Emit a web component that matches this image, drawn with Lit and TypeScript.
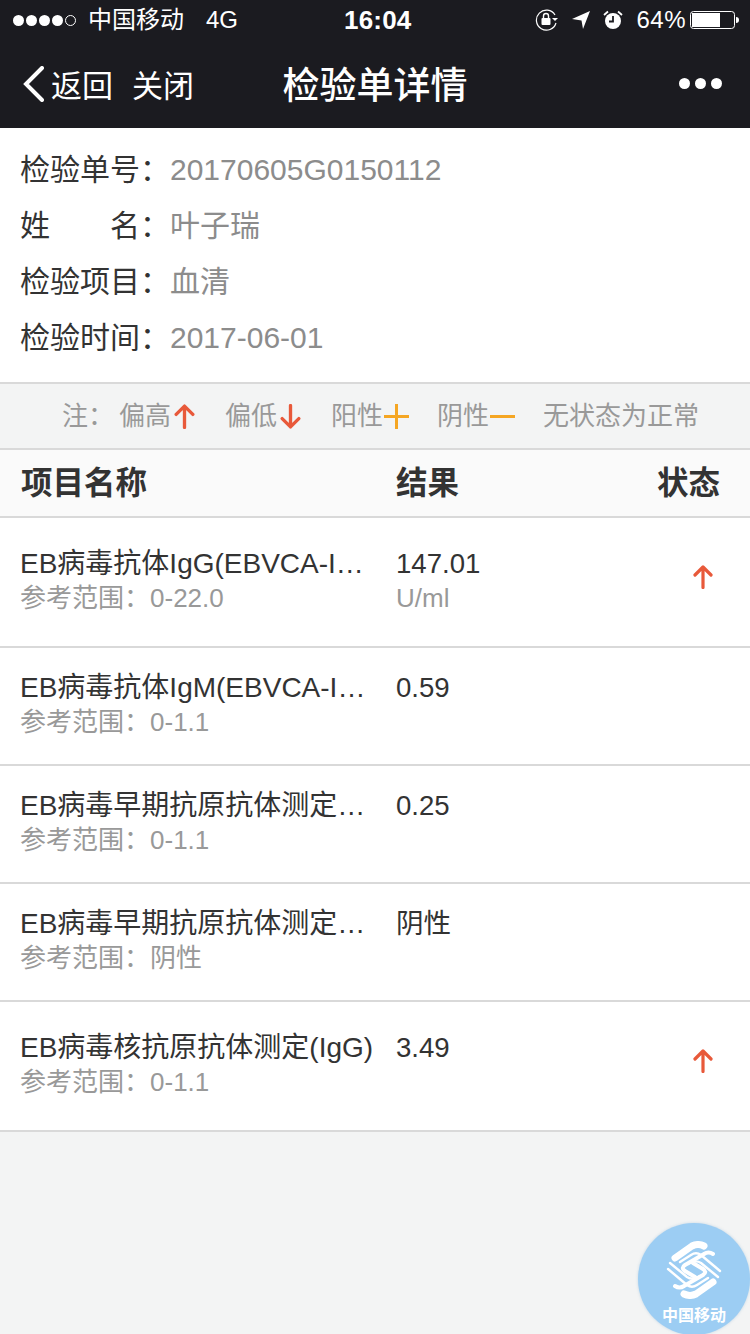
import { LitElement, css, html } from "lit";
import { customElement } from "lit/decorators.js";

const up = html`<svg class="mark" viewBox="0 0 20 24" fill="none" stroke="#e8593a" stroke-width="3.200" stroke-linecap="round" stroke-linejoin="round"><path d="M10 22.500V2M2 10l8-8 8 8"/></svg>`;
const down = html`<svg class="mark" viewBox="0 0 20 24" fill="none" stroke="#e8593a" stroke-width="3.200" stroke-linecap="round" stroke-linejoin="round"><path d="M10 1.500V22M2 14l8 8 8-8"/></svg>`;
const plus = html`<svg class="mark wide" viewBox="0 0 25 25" fill="none" stroke="#f5a623" stroke-width="3"><path d="M0 12.500h25M12.500 0v25"/></svg>`;
const minus = html`<svg class="mark wide" viewBox="0 0 25 25" fill="none" stroke="#f5a623" stroke-width="3"><path d="M0 12.500h25"/></svg>`;

const rows = [
  { name: "EB病毒抗体IgG(EBVCA-IgG)", ref: "0-22.0", value: "147.01", unit: "U/ml", up: true, tall: true },
  { name: "EB病毒抗体IgM(EBVCA-IgM)", ref: "0-1.1", value: "0.59", unit: "", up: false, tall: false },
  { name: "EB病毒早期抗原抗体测定(IgG)", ref: "0-1.1", value: "0.25", unit: "", up: false, tall: false },
  { name: "EB病毒早期抗原抗体测定(IgM)", ref: "阴性", value: "阴性", unit: "", up: false, tall: false },
  { name: "EB病毒核抗原抗体测定(IgG)", ref: "0-1.1", value: "3.49", unit: "", up: true, tall: true },
];

@customElement("app-root")
export class AppRoot extends LitElement {
  static styles = css`
    :host {
      display: block;
      width: 750px;
      height: 1334px;
      overflow: hidden;
      position: relative;
      background: #f3f4f4;
      font-family: "Liberation Sans", "Noto Sans CJK SC", sans-serif;
      color: #333;
    }
    .top {
      background: #1b1b20;
      height: 128px;
      color: #fff;
    }
    .status {
      height: 40px;
      display: flex;
      align-items: center;
      font-size: 24px;
      padding: 0 0 0 13px;
      position: relative;
    }
    .signal {
      display: flex;
      gap: 2px;
      margin-right: 12px;
    }
    .signal i {
      width: 11px;
      height: 11px;
      border-radius: 50%;
      background: #fff;
      box-sizing: border-box;
    }
    .signal i.off {
      background: none;
      border: 1px solid #fff;
    }
    .carrier {
      line-height: 30px;
    }
    .net {
      margin-left: 22px;
    }
    .clock {
      position: absolute;
      left: 344px;
      font-weight: 700;
      font-size: 26px;
      letter-spacing: 0.2px;
    }
    .right {
      margin-left: auto;
      display: flex;
      align-items: center;
      padding-right: 10px;
    }
    .right svg {
      display: block;
    }
    .pct {
      font-size: 24px;
      margin: 0 4px 0 13px;
      letter-spacing: 0.5px;
    }
    .nav {
      height: 88px;
      display: flex;
      align-items: center;
      padding: 0 28px 0 22px;
      position: relative;
    }
    .nav .back {
      font-size: 31px;
      margin-left: 7px;
      line-height: 36px;
      margin-top: 6px;
    }
    .nav .close {
      font-size: 31px;
      margin-left: 19px;
      line-height: 36px;
      margin-top: 6px;
    }
    .nav .title {
      position: absolute;
      left: 0;
      right: 0;
      text-align: center;
      font-size: 37px;
      font-weight: 500;
      line-height: 44px;
      top: 25px;
    }
    .dots {
      margin-left: auto;
      display: flex;
      gap: 5px;
      margin-top: -2px;
    }
    .dots i {
      width: 11px;
      height: 11px;
      border-radius: 50%;
      background: #fff;
    }
    .info {
      background: #fff;
      padding: 14px 20px 0 20px;
      font-size: 30px;
      height: 256px;
      box-sizing: border-box;
      border-bottom: 2px solid #d9d9d9;
    }
    .info div {
      height: 56px;
      display: flex;
      align-items: center;
    }
    .info b {
      font-weight: 400;
      color: #333;
      width: 150px;
      display: flex;
      justify-content: space-between;
      flex-shrink: 0;
      white-space: nowrap;
      line-height: 36px;
    }
    .info i {
      font-style: normal;
    }
    .info span {
      color: #8c8c8c;
      line-height: 36px;
    }
    .legend {
      height: 66px;
      display: flex;
      align-items: center;
      font-size: 26px;
      color: #999;
      padding-left: 62px;
      box-sizing: border-box;
      border-bottom: 2px solid #d9d9d9;
      background: #f3f4f4;
    }
    .legend span {
      line-height: 30px;
      margin-top: -1px;
    }
    .legend .item {
      display: flex;
      align-items: center;
      margin-right: 30px;
    }
    .legend .note {
      margin-right: 5px;
    }
    .item .mark {
      margin-left: 3px;
      width: 21px;
      height: 25px;
    }
    .item .mark.wide {
      width: 25px;
      margin-left: 1px;
      margin-right: -2px;
    }
    .head {
      height: 68px;
      box-sizing: border-box;
      background: #fafafa;
      border-bottom: 2px solid #d9d9d9;
      display: flex;
      align-items: center;
      font-size: 31.500px;
      font-weight: 700;
      padding: 0 30px 0 21px;
    }
    .head span {
      line-height: 36px;
    }
    .c1 {
      width: 375px;
      flex-shrink: 0;
    }
    .c3 {
      margin-left: auto;
    }
    .row {
      height: 118px;
      padding-top: 22px;
      background: #fff;
      border-bottom: 2px solid #d9d9d9;
      box-sizing: border-box;
      display: flex;
      padding-left: 20px;
      position: relative;
    }
    .row.tall {
      height: 130px;
      padding-top: 28px;
    }
    .row .c1 {
      width: 376px;
      padding-right: 22px;
      box-sizing: border-box;
    }
    .name {
      font-size: 28px;
      line-height: 36px;
      white-space: nowrap;
      overflow: hidden;
      text-overflow: ellipsis;
    }
    .sub {
      font-size: 26px;
      line-height: 33px;
      color: #999;
    }
    .val {
      font-size: 27.600px;
      line-height: 36px;
    }
    .state {
      position: absolute;
      left: 693px;
      top: 47px;
    }
    .state .mark {
      display: block;
      width: 20px;
      height: 24px;
    }
    .fab {
      position: absolute;
      left: 638px;
      top: 1223px;
      width: 112px;
      height: 112px;
      border-radius: 50%;
      background: #9ccdf3;
      color: #fff;
      display: flex;
      flex-direction: column;
      align-items: center;
      box-shadow: 0 0 3px rgba(120, 170, 210, 0.4);
    }
    .fab svg {
      margin-top: 18px;
      display: block;
    }
    .fab span {
      font-size: 16px;
      font-weight: 700;
      line-height: 22px;
      margin-top: 6px;
    }
  `;

  render() {
    return html`
      <div class="top">
        <div class="status">
          <div class="signal"><i></i><i></i><i></i><i></i><i class="off"></i></div>
          <span class="carrier">中国移动</span>
          <span class="net">4G</span>
          <span class="clock">16:04</span>
          <div class="right">
            <svg width="24" height="22" viewBox="0 0 24 22" fill="none" stroke="#fff" stroke-width="1.200">
              <path d="M20 6A10 10 0 1 0 21 14"/>
              <path d="M17 9h6l-3 3z" fill="#fff" stroke="none"/>
              <rect x="6.500" y="9" width="9" height="7" rx="1" fill="#fff" stroke="none"/>
              <path d="M8.500 9V7a2.500 2.500 0 0 1 5 0v2" stroke-width="1.400"/>
            </svg>
            <svg style="margin-left:13px" width="18" height="20" viewBox="0 0 18 20" fill="#fff"><path d="M0 9L18 1 11 19 9.500 10.500z"/></svg>
            <svg style="margin-left:13px" width="20" height="20" viewBox="0 0 20 20">
              <circle cx="10" cy="11" r="8" fill="#fff"/>
              <path d="M10 6v5.500H6" fill="none" stroke="#1b1b20" stroke-width="1.800"/>
              <path d="M1 5l4-3.500M19 5l-4-3.500" stroke="#fff" stroke-width="1.800"/>
            </svg>
            <span class="pct">64%</span>
            <svg width="50" height="20" viewBox="0 0 50 20">
              <rect x="0.500" y="1.500" width="44" height="17" rx="3" fill="none" stroke="#fff"/>
              <rect x="2" y="3" width="28" height="14" fill="#fff"/>
              <path d="M46 7a3 3 0 0 1 0 6z" fill="#fff"/>
            </svg>
          </div>
        </div>
        <div class="nav">
          <svg width="22" height="36" viewBox="0 0 22 36" fill="none" stroke="#fff" stroke-width="4" stroke-linecap="round"><path d="M20 2L4 18l16 16"/></svg>
          <span class="back">返回</span>
          <span class="close">关闭</span>
          <span class="title">检验单详情</span>
          <div class="dots"><i></i><i></i><i></i></div>
        </div>
      </div>

      <div class="info">
        <div><b>检验单号：</b><span>20170605G0150112</span></div>
        <div><b><i>姓</i><i>名：</i></b><span>叶子瑞</span></div>
        <div><b>检验项目：</b><span>血清</span></div>
        <div><b>检验时间：</b><span>2017-06-01</span></div>
      </div>

      <div class="legend">
        <span class="note">注：</span>
        <div class="item"><span>偏高</span>${up}</div>
        <div class="item"><span>偏低</span>${down}</div>
        <div class="item"><span>阳性</span>${plus}</div>
        <div class="item"><span>阴性</span>${minus}</div>
        <span>无状态为正常</span>
      </div>

      <div class="head"><span class="c1">项目名称</span><span>结果</span><span class="c3">状态</span></div>

      ${rows.map(
        (r) => html`<div class="row ${r.tall ? "tall" : ""}">
          <div class="c1">
            <div class="name">${r.name}</div>
            <div class="sub">参考范围：${r.ref}</div>
          </div>
          <div>
            <div class="val">${r.value}</div>
            ${r.unit ? html`<div class="sub">${r.unit}</div>` : ""}
          </div>
          ${r.up ? html`<div class="state">${up}</div>` : ""}
        </div>`
      )}

      <div class="fab">
        <svg width="58" height="58" viewBox="0 0 58 58" fill="none" stroke="#fff" stroke-linecap="round" stroke-linejoin="round">
          <path stroke-width="7" d="M39 5C35 3 31 3 27 5L10 17"/>
          <path stroke-width="4" d="M48 13C45 11 42 11 39 13L20 24c-3 2-3 4 0 6l10 6"/>
          <path stroke-width="2.400" d="M5 22l17 14c3 2 6 2 9 1l4-2"/>
          <path stroke-width="2.400" d="M3 28l19 16c3 2 7 2 10 0l11-7"/>
          <g transform="rotate(180 29 29)">
            <path stroke-width="7" d="M39 5C35 3 31 3 27 5L10 17"/>
            <path stroke-width="4" d="M48 13C45 11 42 11 39 13L20 24c-3 2-3 4 0 6l10 6"/>
            <path stroke-width="2.400" d="M5 22l17 14c3 2 6 2 9 1l4-2"/>
            <path stroke-width="2.400" d="M3 28l19 16c3 2 7 2 10 0l11-7"/>
          </g>
        </svg>
        <span>中国移动</span>
      </div>
    `;
  }
}
